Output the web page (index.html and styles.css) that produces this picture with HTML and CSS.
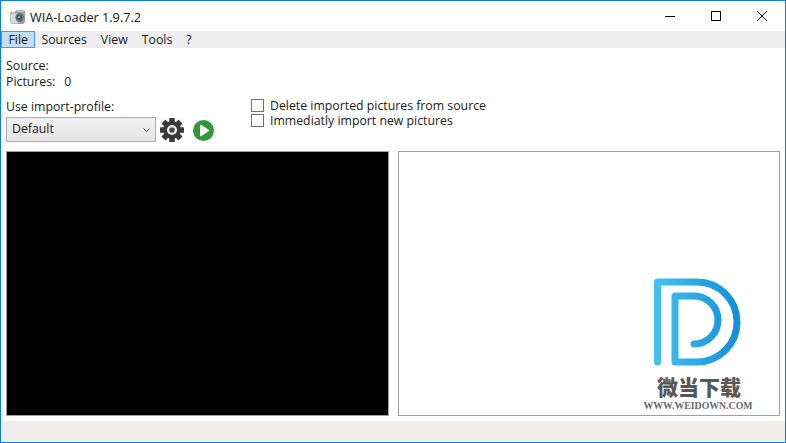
FILE: index.html
```html
<!DOCTYPE html>
<html lang="en">
<head>
<meta charset="utf-8">
<title>WIA-Loader 1.9.7.2</title>
<link rel="stylesheet" href="styles.css">
</head>
<body>
<div class="window">
  <header class="titlebar">
    <svg class="app-icon" width="18" height="18" viewBox="0 0 18 18">
      <path d="M1 5 L3 3 H7 L8 2 H15 L16 3 V14 L14 16 H3 L1 14 Z" fill="#9a9fa3"/>
      <path d="M1.500 5.500 H9 V15.500 H3 L1.500 14 Z" fill="#d8dadc"/>
      <path d="M8 2.500 H15 V4 H8 Z" fill="#c4c7ca"/>
      <circle cx="10.500" cy="9.500" r="4.200" fill="#6a6f74"/>
      <circle cx="10.500" cy="9.500" r="2.600" fill="#3a5a78"/>
      <circle cx="10" cy="9" r="1" fill="#9fc0d8"/>
      <rect x="3" y="3" width="3" height="1.500" fill="#eeeeee"/>
    </svg>
    <span class="app-title">WIA-Loader 1.9.7.2</span>
    <div class="win-controls">
      <span class="win-btn"><svg width="10" height="10" viewBox="0 0 10 10"><path d="M0 5.500 H10" stroke="#000" fill="none"/></svg></span>
      <span class="win-btn"><svg width="10" height="10" viewBox="0 0 10 10"><rect x=".5" y=".5" width="9" height="9" stroke="#000" fill="none"/></svg></span>
      <span class="win-btn"><svg width="10" height="10" viewBox="0 0 10 10"><path d="M0 0 L10 10 M10 0 L0 10" stroke="#000" stroke-width="1" fill="none"/></svg></span>
    </div>
  </header>
  <nav class="menubar">
    <span class="menu-item active">File</span>
    <span class="menu-item">Sources</span>
    <span class="menu-item">View</span>
    <span class="menu-item">Tools</span>
    <span class="menu-item">?</span>
  </nav>
  <main class="content">
    <div class="info">
      <div class="info-row">Source:</div>
      <div class="info-row">Pictures:<span class="count">0</span></div>
    </div>
    <div class="profile-row">
      <div class="profile">
        <div class="profile-label">Use import-profile:</div>
        <div class="profile-controls">
          <div class="select">Default
            <svg class="chevron" width="7" height="4" viewBox="0 0 7 4"><path d="M.5 .5 L3.500 3.500 L6.500 .5" stroke="#555" fill="none"/></svg>
          </div>
          <svg class="gear" width="24" height="24" viewBox="-12 -12 24 24">
            <g fill="#3a3a3a">
              <circle r="9"/>
              <rect x="-2.800" y="-12" width="5.600" height="24" rx=".6"/>
              <rect x="-2.800" y="-12" width="5.600" height="24" rx=".6" transform="rotate(45)"/>
              <rect x="-2.800" y="-12" width="5.600" height="24" rx=".6" transform="rotate(90)"/>
              <rect x="-2.800" y="-12" width="5.600" height="24" rx=".6" transform="rotate(135)"/>
            </g>
            <circle r="5" fill="#f4f4f4"/>
            <circle r="2.800" fill="#4a4a4a"/>
          </svg>
          <svg class="play" width="21" height="21" viewBox="0 0 21 21">
            <circle cx="10.500" cy="10.500" r="10.500" fill="#2f9a35"/>
            <path d="M7.500 5 L16 10.500 L7.500 16 Z" fill="#fff" stroke="#fff" stroke-linejoin="round"/>
          </svg>
        </div>
      </div>
      <div class="options">
        <label class="option"><span class="check"></span><span class="option-text">Delete imported pictures from source</span></label>
        <label class="option"><span class="check"></span><span class="option-text">Immediatly import new pictures</span></label>
      </div>
    </div>
    <div class="panels">
      <div class="panel dark"></div>
      <div class="panel light">
        <div class="watermark">
          <svg class="wm-logo" width="90" height="88" viewBox="0 0 90 88">
            <defs>
              <linearGradient id="wmg" x1="0" y1="0" x2="1" y2="0">
                <stop offset="0" stop-color="#45c0ee"/>
                <stop offset="1" stop-color="#1491d9"/>
              </linearGradient>
            </defs>
            <path d="M4.500 84 V4 H44 A40 40 0 0 1 44 84 H22 V18 H41 A24 24 0 0 1 41 66" fill="none" stroke="url(#wmg)" stroke-width="7" stroke-linecap="round" stroke-linejoin="round"/>
          </svg>
          <div class="wm-name">微当下载</div>
          <div class="wm-url">WWW.WEIDOWN.COM</div>
        </div>
      </div>
    </div>
  </main>
  <footer class="statusbar"></footer>
</div>
</body>
</html>
```
FILE: styles.css
```css
* { box-sizing: border-box; }
html, body { margin: 0; padding: 0; }
body { width: 786px; height: 443px; overflow: hidden; background: #fff; font-family: "Open Sans", "Noto Sans", sans-serif; font-size: 12.300px; color: #1a1a1a; }
.window { width: 786px; height: 443px; display: flex; flex-direction: column; border: 1px solid #0f80d8; background: #fff; }
.titlebar { height: 30px; display: flex; align-items: center; padding-left: 8px; flex: none; }
.app-icon { flex: none; margin-right: 3px; margin-top: 1px; }
.app-title { font-size: 12.700px; color: #111; margin-top: 1px; }
.win-controls { margin-left: auto; display: flex; align-self: stretch; }
.win-btn { width: 46px; display: flex; align-items: center; justify-content: center; }
.win-btn svg { display: block; }
.menubar { height: 17px; flex: none; background: #eeeeee; display: flex; align-items: stretch; }
.menu-item { padding: 0 6px; line-height: 16px; border: 1px solid transparent; }
.menu-item.active { background: #c2dff0; border-color: #3f9fd6; padding: 0 6.500px; margin-right: -1px; }
.content { flex: 1; min-height: 0; padding: 10px 5px 5px; display: flex; flex-direction: column; }
.info-row { line-height: 16px; height: 16px; }
.count { margin-left: 9px; }
.profile-row { display: flex; margin-top: 9px; height: 44px; }
.profile { width: 245px; flex: none; }
.profile-label { line-height: 16px; height: 18px; }
.profile-controls { display: flex; align-items: center; }
.select { width: 150px; height: 25px; border: 1px solid #adadad; background: linear-gradient(#f0f0f0, #e5e5e5); padding-left: 5px; line-height: 22px; position: relative; }
.chevron { position: absolute; right: 5px; top: 10px; }
.gear { margin: 1px 0 0 4px; flex: none; }
.play { margin: 1px 0 0 9px; flex: none; }
.options { display: flex; flex-direction: column; margin-top: -1px; }
.option { display: flex; align-items: center; height: 15px; }
.option-text { line-height: 15px; height: 15px; }
.check { width: 13px; height: 13px; border: 1px solid #707070; background: #fff; margin-right: 6px; flex: none; }
.panels { flex: 1; min-height: 0; display: grid; grid-template-columns: 383px 382px; column-gap: 9px; margin-top: 8px; }
.panel { border: 1px solid #a0a0a0; min-height: 0; }
.dark { background: #000; }
.light { background: #fff; display: flex; justify-content: flex-end; align-items: flex-end; padding: 0 26px 2px 0; }
.watermark { display: flex; flex-direction: column; align-items: center; width: 110px; }
.wm-logo { display: block; margin-right: 1px; }
.wm-name { font-family: "Noto Sans CJK SC", sans-serif; font-weight: 900; font-size: 21px; line-height: 24px; color: #585858; margin-top: 8px; margin-left: 2px; }
.wm-url { font-family: "Liberation Serif", serif; font-weight: 700; font-size: 9.800px; line-height: 12px; color: #6a6a6a; margin-top: 2px; margin-bottom: 1px; white-space: nowrap; }
.statusbar { height: 21px; flex: none; background: #f0eded; }
```
